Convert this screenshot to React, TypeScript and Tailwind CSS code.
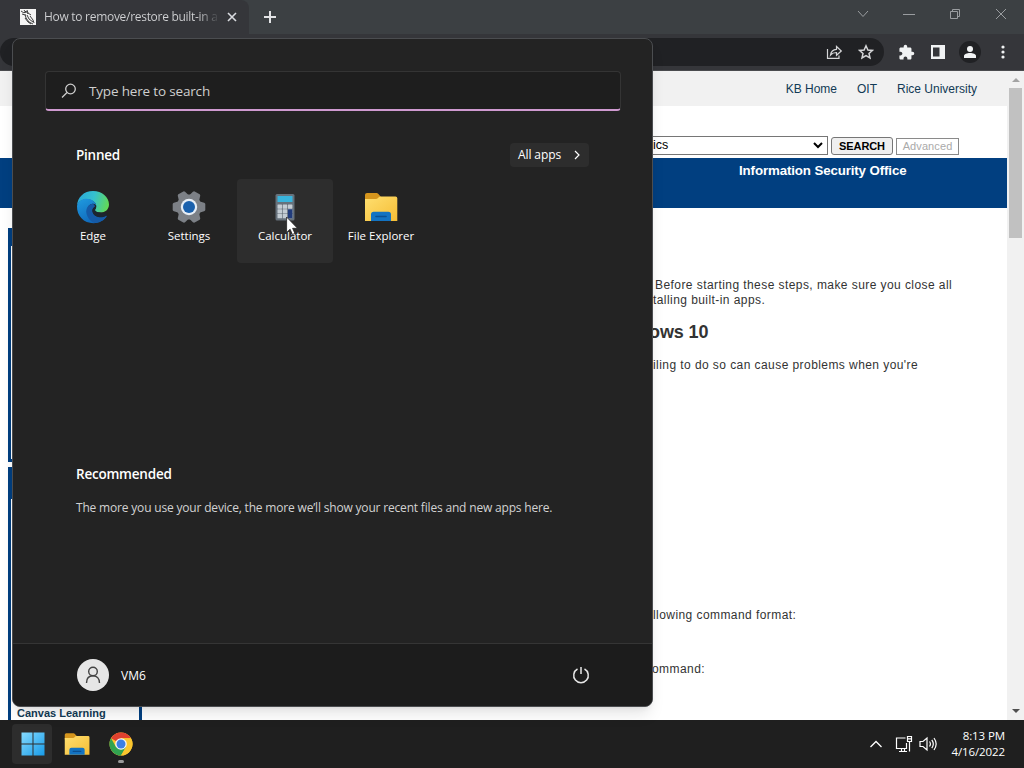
import React from "react";
import { MdExtension } from "react-icons/md";

const EdgeIcon = () => (
  <svg width="34" height="34" viewBox="0 0 34 34">
    <defs>
      <linearGradient id="edgeTop" x1="0" y1="0.3" x2="1" y2="0.5">
        <stop offset="0" stopColor="#2aa8d8" />
        <stop offset="0.5" stopColor="#35c1cf" />
        <stop offset="1" stopColor="#62d957" />
      </linearGradient>
      <linearGradient id="edgeLeft" x1="0" y1="0" x2="0.6" y2="1">
        <stop offset="0" stopColor="#1f9be0" />
        <stop offset="1" stopColor="#0f65b8" />
      </linearGradient>
    </defs>
    <path d="M1 16C1.500 7 8 1 17 1c9 0 16 6 16 13.500 0 5-4 8-8.500 8-3.500 0-5.500-1.200-5.500-2.400 0-.9 1.300-1.600 1.300-3.900 0-4-4.500-6.900-9.800-6.900C6 9.300 2 12 1 16z" fill="url(#edgeTop)" />
    <path d="M1 16c1-4.500 5-7.200 9.500-7.200 5.300 0 9.800 3.200 9.800 7.400-.2-1.800-2-2.900-4-2.400C12 14.800 11 18 12 21.500 13.500 26.500 19 29.500 25 28.500c2-.3 4-1.200 5.600-2C28 30.500 23 33.200 17.500 33.200 8 33.200.6 26 1 16z" fill="url(#edgeLeft)" />
    <path d="M16.300 13.800C12 14.800 9.500 19 10.500 23.500c.9 4.200 4 8 8 9.600 5-.4 9.300-3 12-6.300.7-.9 0-1.300-.8-.9-5.500 2.600-12.200.6-13.200-4.500-.4-2 .3-3.300 2.500-4.800-.2-1.500-1.100-2.700-2.700-2.800z" fill="#155aa7" />
    <path d="M18.800 17c-2 1.500-2.600 3-2.200 5 .6 2.400 2.800 4.300 5.600 5 3 .6 5.600 0 7.600-1.100l1.500-2.400c-1.800.3-4.300-.2-6.800-1-3.500 0-5.500-1.200-5.500-2.400 0-.9 1-1.500 1.200-3.300z" fill="#1c2530" />
  </svg>
);

const SettingsIcon = () => (
  <svg width="34" height="34" viewBox="0 0 34 34">
    <g fill="#7c8086">
      <circle cx="17" cy="17" r="12.500" />
      {[30, 90, 150, 210, 270, 330].map((a) => (
        <path key={a} d="M11.300 7 12.800 1.900q.3-1 1.300-1.200h5.800q1 .2 1.300 1.200L22.700 7z" transform={`rotate(${a} 17 17)`} />
      ))}
    </g>
    <circle cx="17" cy="17" r="8.200" fill="#e6edf5" />
    <circle cx="17" cy="17" r="6" fill="#1a61ad" />
  </svg>
);

const CalculatorIcon = () => (
  <svg width="34" height="34" viewBox="0 0 34 34">
    <rect x="7.500" y="4" width="19" height="26.500" rx="1.500" fill="#66717b" />
    <rect x="9.500" y="6" width="15" height="6" rx="0.5" fill="#38b4dc" />
    {[14.500, 19.300, 24.100].map((y) =>
      [9.500, 14.700, 19.900].map((x) => (
        <rect key={`${x}-${y}`} x={x} y={y} width="4.500" height="4.200" rx="0.4" fill="#c3ccd3" />
      ))
    )}
    <rect x="19.900" y="19.300" width="4.500" height="9" rx="0.4" fill="#213c7c" />
  </svg>
);

const FolderIcon = ({ size }: { size: number }) => (
  <svg width={size} height={size} viewBox="0 0 34 34">
    <defs>
      <linearGradient id="folder" x1="0" y1="0" x2="1" y2="1">
        <stop offset="0" stopColor="#ffdf70" />
        <stop offset="1" stopColor="#f5bd35" />
      </linearGradient>
    </defs>
    <path d="M1 5q0-2 2-2h9.500q1 0 1.700.8L17 7l-3 4H1z" fill="#d5951d" />
    <path d="M1 9h11q1 0 1.800-.8L15 7q.6-.6 1.500-.6H31.500q1.800 0 1.800 1.800V31H1z" fill="url(#folder)" />
    <path d="M7 31v-6.500q0-2.700 2.700-2.700h14.600q2.700 0 2.700 2.700V31z" fill="#1373c2" />
    <path d="M12 26.500h10" stroke="#0b4f91" strokeWidth="1.600" strokeLinecap="round" />
  </svg>
);

const ChromeIcon = () => (
  <svg width="24" height="24" viewBox="0 0 24 24">
    <circle cx="12" cy="12" r="11.500" fill="#fbc62e" />
    <path d="M12 12 2.040 6.250A11.500 11.500 0 0 1 21.960 6.250H12z" fill="#e0412f" />
    <path d="M2.040 6.250A11.500 11.500 0 0 0 12 23.500l5-8.600L12 12 7 14.900z" fill="#31a350" />
    <path d="M21.960 6.250H12v5.750l5 2.900-5 8.600A11.500 11.500 0 0 0 21.960 6.250z" fill="#fbc62e" />
    <circle cx="12" cy="12" r="5.800" fill="#f6f6f6" />
    <circle cx="12" cy="12" r="4.500" fill="#3c7fe4" />
  </svg>
);

const Favicon = () => (
  <svg className="shrink-0" width="16" height="16" viewBox="0 0 16 16">
    <path d="M0 0h16v16H0z" fill="#f4f4f4" />
    <path d="M1 2l3 2 2-2 2 3M2 5l3 1M4 1l2 3M7 1l1 3 3 2M5 5l1 4 3 4 4 2M7 6l2 4 4 3M10 7l3 4 1 3M5 9l3 4 3 2" stroke="#2b2b2b" strokeWidth="0.9" fill="none" />
  </svg>
);

const TitleBar = () => (
  <div className="flex h-[34px] shrink-0 bg-[#3c4043] text-[#9a9da0]">
    <div className="flex w-[249px] items-center rounded-tr-lg bg-[#35363a] pl-5 pr-3">
      <Favicon />
      <div className="ml-2 w-[176px] shrink-0 whitespace-nowrap bg-gradient-to-r from-[#d2d3d5] from-88% to-[#35363a] bg-clip-text text-[12px] tracking-[-0.29px] text-transparent">
        How to remove/restore built-in a
      </div>
      <svg className="ml-[7px] shrink-0" width="10" height="10" viewBox="0 0 10 10" stroke="#dadce0" strokeWidth="1.600">
        <path d="M1 1l8 8M9 1L1 9" />
      </svg>
    </div>
    <svg className="ml-[15px] mt-[11px]" width="12" height="12" viewBox="0 0 12 12" stroke="#e3e4e6" strokeWidth="2">
      <path d="M6 0v12M0 6h12" />
    </svg>
    <div className="ml-auto mr-[17px] mt-[8px] flex h-3 items-center gap-[34px]">
      <svg width="12" height="12" viewBox="0 0 12 12" fill="none" stroke="currentColor">
        <path d="M1 3l5 5.500L11 3" />
      </svg>
      <svg width="12" height="12" viewBox="0 0 12 12" fill="none" stroke="currentColor">
        <path d="M0 6.500h12" />
      </svg>
      <svg width="12" height="12" viewBox="0 0 12 12" fill="none" stroke="currentColor">
        <path d="M1.500 3.500h7v7h-7zM3.500 3.500v-2h7v7h-2" />
      </svg>
      <svg width="12" height="12" viewBox="0 0 12 12" fill="none" stroke="currentColor">
        <path d="M1 1l10 10M11 1L1 11" />
      </svg>
    </div>
  </div>
);

const Toolbar = () => (
  <div className="flex h-[37px] shrink-0 items-center border-b border-[#4a4b4e] bg-[#35363a] pr-[19px]">
    <div className="flex h-7 flex-1 items-center justify-end gap-[15px] rounded-full bg-[#202124] pr-[10px] text-[#d5d6d8]">
      <svg width="17" height="16" viewBox="0 0 17 16" fill="none" stroke="currentColor" strokeWidth="1.200">
        <path d="M1.500 5v9.300H13V11.500" />
        <path d="M4.500 11C5 7.500 7 5.500 10.500 5.300V2.500L15.300 7l-4.800 4.300V8.500C8 8.500 6 9.300 4.500 11z" />
      </svg>
      <svg width="16" height="16" viewBox="0 0 16 16" fill="none" stroke="currentColor" strokeWidth="1.500">
        <path d="M8 1.800l1.900 4.200 4.500.4-3.400 3 1 4.500L8 11.600l-4 2.300 1-4.500-3.400-3 4.500-.4z" />
      </svg>
    </div>
    <div className="ml-[14px] flex items-center text-[#f1f3f4]">
      <MdExtension size={17} />
      <svg className="ml-[16px]" width="14" height="14" viewBox="0 0 14 14">
        <path fillRule="evenodd" d="M0 0h14v14H0zM2 2.500v9h6.500v-9z" fill="currentColor" />
      </svg>
      <div className="ml-[14px] flex size-[22px] items-center justify-center rounded-full bg-[#202124]">
        <svg width="12" height="12" viewBox="0 0 12 12" fill="currentColor">
          <circle cx="6" cy="3" r="3" />
          <path d="M0 12V10c0-2 3-3 6-3s6 1 6 3v2z" />
        </svg>
      </div>
      <svg className="ml-[20px]" width="4" height="14" viewBox="0 0 4 14" fill="currentColor">
        <circle cx="2" cy="2" r="1.600" />
        <circle cx="2" cy="7" r="1.600" />
        <circle cx="2" cy="12" r="1.600" />
      </svg>
    </div>
  </div>
);

const Scrollbar = () => (
  <div className="flex w-[17px] shrink-0 flex-col items-center bg-[#f1f1f1]">
    <svg className="mt-[7px]" width="8" height="4" viewBox="0 0 8 4">
      <path d="M0 4l4-4 4 4z" fill="#a3a3a3" />
    </svg>
    <div className="mt-[6px] h-[150px] w-[13px] bg-[#c1c1c1]" />
    <svg className="mb-[7px] mt-auto" width="8" height="4" viewBox="0 0 8 4">
      <path d="M0 0l4 4 4-4z" fill="#505050" />
    </svg>
  </div>
);

const WebPage = () => (
  <div className="flex min-h-0 flex-1 bg-white font-['Liberation_Sans',Arial,sans-serif] text-[#333]">
    <div className="flex min-w-0 flex-1 flex-col overflow-hidden">
      <div className="flex h-[35px] shrink-0 justify-end gap-5 bg-[#f1f1f1] pr-[30px] pt-[9px] text-[12px] leading-[18px] text-[#123a55]">
        <span>KB Home</span>
        <span>OIT</span>
        <span>Rice University</span>
      </div>
      <div className="flex h-[52px] shrink-0 items-end pb-[3px] pl-[500px] text-black">
        <div className="flex h-[19px] w-[328px] items-center justify-between border border-[#767676] pl-[152px] pr-1 text-[12.500px]">
          ics
          <svg width="10" height="7" viewBox="0 0 10 7" fill="none" stroke="#000" strokeWidth="2">
            <path d="M1 1l4 4 4-4" />
          </svg>
        </div>
        <button className="ml-[3px] h-[18px] w-[62px] rounded-[3px] border border-[#767676] bg-[#efefef] text-[11px] leading-[15px] font-semibold tracking-[-0.1px]">SEARCH</button>
        <button className="ml-[3px] h-[17px] w-[63px] border border-[#8a8a8a] bg-white text-[11px] leading-[15px] tracking-[0.1px] text-[#aaa]">Advanced</button>
      </div>
      <div className="h-[50px] shrink-0 bg-[#013f80] pl-[739px] pt-[3px] text-[13.300px] leading-5 font-bold tracking-[-0.12px] whitespace-nowrap text-white">
        Information Security Office
      </div>
      <div className="flex min-h-0 flex-1">
        <div className="flex w-[653px] shrink-0 flex-col pl-2 pt-5">
          <div className="h-[234px] w-[134px] border-[3px] border-t-[18px] border-[#013f80]" />
          <div className="mt-[5px] flex flex-1 w-[134px] items-end border-x-[3px] border-t-[32px] border-[#013f80] pl-[6px] text-[11px] leading-[14px] font-bold tracking-[0.01px] whitespace-nowrap text-[#123a55]">
            Canvas Learning
          </div>
        </div>
        <div className="flex-1 pt-[70px] text-[12px] leading-[15px] tracking-[0.43px] whitespace-nowrap">
          <p className="pl-[2px]">Before starting these steps, make sure you close all</p>
          <p>talling built-in apps.</p>
          <h2 className="-ml-1 mt-[13px] text-[18px] leading-[22px] font-bold tracking-[-0.1px]">ows 10</h2>
          <p className="mt-[15px]">iling to do so can cause problems when you're</p>
          <p className="mt-[235px]">llowing command format:</p>
          <p className="-ml-[1px] mt-[39px]">ommand:</p>
        </div>
      </div>
    </div>
    <Scrollbar />
  </div>
);

const pinned = [
  { name: "Edge", icon: <EdgeIcon /> },
  { name: "Settings", icon: <SettingsIcon /> },
  { name: "Calculator", icon: <CalculatorIcon />, active: true },
  { name: "File Explorer", icon: <FolderIcon size={34} /> },
];

const StartMenu = () => (
  <div className="absolute left-3 top-[38px] flex h-[669px] w-[641px] flex-col overflow-hidden rounded-lg border border-[#4b4d50] bg-[#232323] text-white shadow-lg">
    <div className="ml-8 mt-8 flex h-10 w-[576px] shrink-0 items-center rounded border border-b-2 border-[#343434] border-b-[#cf9ad0] bg-[#1e1e1e] pl-[15px] pt-px text-[13.500px] tracking-[-0.17px] text-[#cfcfcf]">
      <svg width="16" height="16" viewBox="0 0 16 16" fill="none" stroke="currentColor" strokeWidth="1.300">
        <circle cx="9.500" cy="6" r="4.800" />
        <path d="M6 9.500L1 14.500" />
      </svg>
      <span className="ml-3">Type here to search</span>
    </div>
    <div className="mt-8 flex items-center justify-between pl-[63px] pr-[63px]">
      <h3 className="text-[13.500px] font-semibold tracking-[-0.25px]">Pinned</h3>
      <button className="flex h-6 w-[79px] items-center justify-between rounded bg-[#2d2d2d] px-2 text-[12px] tracking-[-0.1px]">
        All apps
        <svg width="8" height="10" viewBox="0 0 8 10" fill="none" stroke="currentColor" strokeWidth="1.200">
          <path d="M2 1l4 4-4 4" />
        </svg>
      </button>
    </div>
    <div className="mt-3 flex pl-8">
      {pinned.map((app) => (
        <div
          key={app.name}
          className={`flex h-[84px] w-24 flex-col items-center rounded pt-[11px] ${app.active ? "bg-[#2d2d2d]" : ""}`}
        >
          {app.icon}
          <span className="mt-1 text-[11.500px] leading-4 whitespace-nowrap">{app.name}</span>
        </div>
      ))}
    </div>
    <div className="mt-[201px] pl-[63px]">
      <h3 className="text-[13.500px] leading-5 font-semibold tracking-[-0.22px]">Recommended</h3>
      <p className="mt-4 text-[12px] leading-4 tracking-[-0.18px] text-[#d2d2d2]">
        The more you use your device, the more we’ll show your recent files and new apps here.
      </p>
    </div>
    <div className="mt-auto flex h-[63px] shrink-0 items-center border-t border-[#353535] bg-[#1c1c1c] pl-16 pr-[62px]">
      <div className="flex size-8 items-center justify-center rounded-full bg-[#e6e6e6]">
        <svg width="16" height="18" viewBox="0 0 16 18" fill="none" stroke="#444" strokeWidth="1.400">
          <circle cx="8" cy="5.500" r="4.300" />
          <path d="M1.500 17c0-4.500 2.600-7.200 6.500-7.200s6.500 2.700 6.500 7.200" />
        </svg>
      </div>
      <span className="ml-3 pt-px text-[12px]">VM6</span>
      <svg className="ml-auto" width="18" height="18" viewBox="0 0 18 18" fill="none" stroke="#e6e6e6" strokeWidth="1.500">
        <path d="M9 1v7M5.500 3a7.300 7.300 0 1 0 7 0" />
      </svg>
    </div>
  </div>
);

const Taskbar = () => (
  <div className="flex h-12 shrink-0 items-center bg-[#1f1f1f] pl-3 pr-[19px] text-white">
    <div className="flex size-10 items-center justify-center rounded bg-[#2d2d2d] pl-px">
      <svg width="24" height="24" viewBox="0 0 24 24">
        <defs>
          <linearGradient id="win" x1="0" y1="0" x2="24" y2="24" gradientUnits="userSpaceOnUse">
            <stop offset="0" stopColor="#88dcff" />
            <stop offset="1" stopColor="#159ae8" />
          </linearGradient>
        </defs>
        <path d="M.5.5h11v11H.5zM12.500.5h11v11h-11zM.5 12.500h11v11H.5zM12.500 12.500h11v11h-11z" fill="url(#win)" />
      </svg>
    </div>
    <div className="ml-3">
      <FolderIcon size={26} />
    </div>
    <div className="relative ml-[19px]">
      <ChromeIcon />
      <div className="absolute left-[9px] top-[28px] h-[3px] w-[6px] rounded-full bg-[#9a9a9a]" />
    </div>
    <div className="ml-auto flex items-center">
      <svg width="14" height="8" viewBox="0 0 14 8" fill="none" stroke="currentColor" strokeWidth="1.300">
        <path d="M1.500 7L7 1.500 12.500 7" />
      </svg>
      <svg className="ml-[12px]" width="18" height="18" viewBox="0 0 18 18" fill="none" stroke="currentColor" strokeWidth="1.200">
        <path d="M10.500 3H1.500v10.500h10V8M4 16.500h8M6.500 13.500v3M9.500 13.500v3M12.500 1.500h4v5h-4zM14.500 6.500v10M12.500 3.800h4" />
      </svg>
      <svg className="ml-[6px]" width="18" height="16" viewBox="0 0 18 16" fill="none" stroke="currentColor" strokeWidth="1.200">
        <path d="M1 5.500h3L8 2v12l-4-3.500H1zM10.500 5.500q1.800 2.500 0 5M12.800 3.800q3 4.200 0 8.400M15 2q4.300 6 0 12" />
      </svg>
      <div className="ml-[14px] w-[54px] text-right text-[11.500px] leading-4 tracking-[-0.1px] whitespace-nowrap">
        <div>8:13 PM</div>
        <div>4/16/2022</div>
      </div>
    </div>
  </div>
);

const App = () => {
  return (
    <div className="relative flex h-[768px] w-[1024px] flex-col overflow-hidden font-['Open_Sans','Noto_Sans',sans-serif]">
      <TitleBar />
      <Toolbar />
      <WebPage />
      <Taskbar />
      <StartMenu />
      <svg className="absolute left-[286px] top-[216px]" width="13" height="20" viewBox="0 0 13 20">
        <path d="M.6 1v15.500l3.500-3.300 2.300 5.300 2.500-1.100-2.300-5.100h4.900z" fill="#fff" stroke="#222" strokeWidth="0.8" />
      </svg>
    </div>
  );
};

export default App;
